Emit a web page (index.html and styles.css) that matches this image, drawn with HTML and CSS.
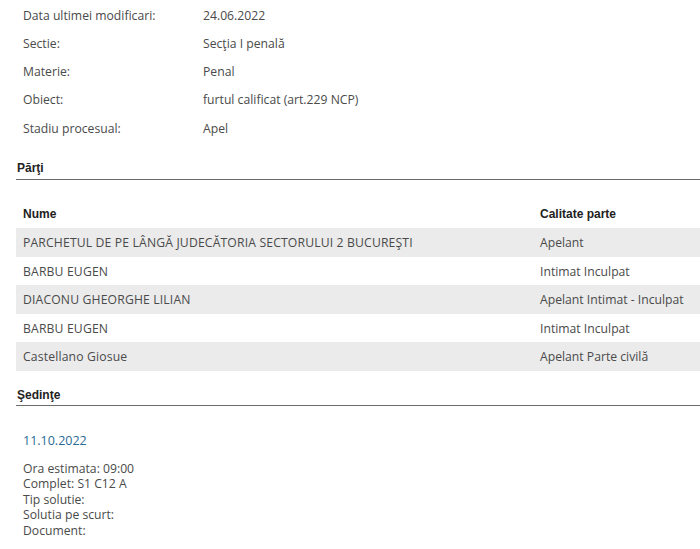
FILE: index.html
```html
<!DOCTYPE html>
<html>
<head>
<meta charset="utf-8">
<link rel="stylesheet" href="styles.css">
</head>
<body>
<div class="page">
  <div class="info">
    <div class="info-row"><span class="lbl">Data ultimei modificari:</span><span class="val">24.06.2022</span></div>
    <div class="info-row"><span class="lbl">Sectie:</span><span class="val">Secţia I penală</span></div>
    <div class="info-row"><span class="lbl">Materie:</span><span class="val">Penal</span></div>
    <div class="info-row"><span class="lbl">Obiect:</span><span class="val">furtul calificat (art.229 NCP)</span></div>
    <div class="info-row"><span class="lbl">Stadiu procesual:</span><span class="val">Apel</span></div>
  </div>

  <h2 class="section-title parti">Părţi</h2>

  <div class="parties">
    <div class="prow head"><span class="c1">Nume</span><span class="c2">Calitate parte</span></div>
    <div class="prow alt"><span class="c1">PARCHETUL DE PE LÂNGĂ JUDECĂTORIA SECTORULUI 2 BUCUREŞTI</span><span class="c2">Apelant</span></div>
    <div class="prow"><span class="c1">BARBU EUGEN</span><span class="c2">Intimat Inculpat</span></div>
    <div class="prow alt"><span class="c1">DIACONU GHEORGHE LILIAN</span><span class="c2">Apelant Intimat - Inculpat</span></div>
    <div class="prow"><span class="c1">BARBU EUGEN</span><span class="c2">Intimat Inculpat</span></div>
    <div class="prow alt"><span class="c1">Castellano Giosue</span><span class="c2">Apelant Parte civilă</span></div>
  </div>

  <h2 class="section-title sedinte">Şedinţe</h2>

  <div class="session">
    <div class="date">11.10.2022</div>
    <div class="details">
      <div>Ora estimata: 09:00</div>
      <div>Complet: S1 C12 A</div>
      <div>Tip solutie:</div>
      <div>Solutia pe scurt:</div>
      <div>Document:</div>
    </div>
  </div>
</div>
</body>
</html>
```

FILE: styles.css
```css
html, body {
  margin: 0;
  padding: 0;
  background: #fff;
}
body {
  font-family: "Open Sans", "Noto Sans", sans-serif;
  font-size: 12.2px;
  color: #4a4a4a;
}
.page {
  padding-left: 16px;
  width: 684px;
}
.info {
  padding-top: 1px;
}
.info-row {
  display: flex;
  height: 28.25px;
  align-items: center;
  padding-left: 7px;
}
.info-row .lbl {
  width: 180px;
}
.section-title {
  font-family: "Liberation Sans", Arial, sans-serif;
  font-size: 12px;
  font-weight: bold;
  color: #222;
  margin: 0;
  padding-left: 1px;
  border-bottom: 1.5px solid #6c6c6c;
}
.parti {
  margin-top: 18px;
  height: 16px;
  line-height: 16px;
  padding-bottom: 3px;
}
.parties {
  margin-top: 20px;
}
.prow {
  display: flex;
  align-items: center;
  height: 28.5px;
  padding-left: 7px;
}
.prow .c1 {
  width: 517px;
}
.prow.head {
  font-family: "Liberation Sans", Arial, sans-serif;
  font-size: 12px;
  font-weight: bold;
  color: #222;
  height: 28px;
}
.prow.alt {
  background: #ebebeb;
}
.prow:not(.head) .c1 {
  letter-spacing: 0.15px;
}
.sedinte {
  margin-top: 16px;
  height: 16px;
  line-height: 16px;
  padding-bottom: 2px;
}
.session {
  padding-left: 7px;
  padding-top: 26px;
}
.date {
  color: #2a6a94;
  font-size: 12.5px;
  line-height: 18px;
}
.details {
  margin-top: 11px;
  line-height: 15.5px;
}
```
